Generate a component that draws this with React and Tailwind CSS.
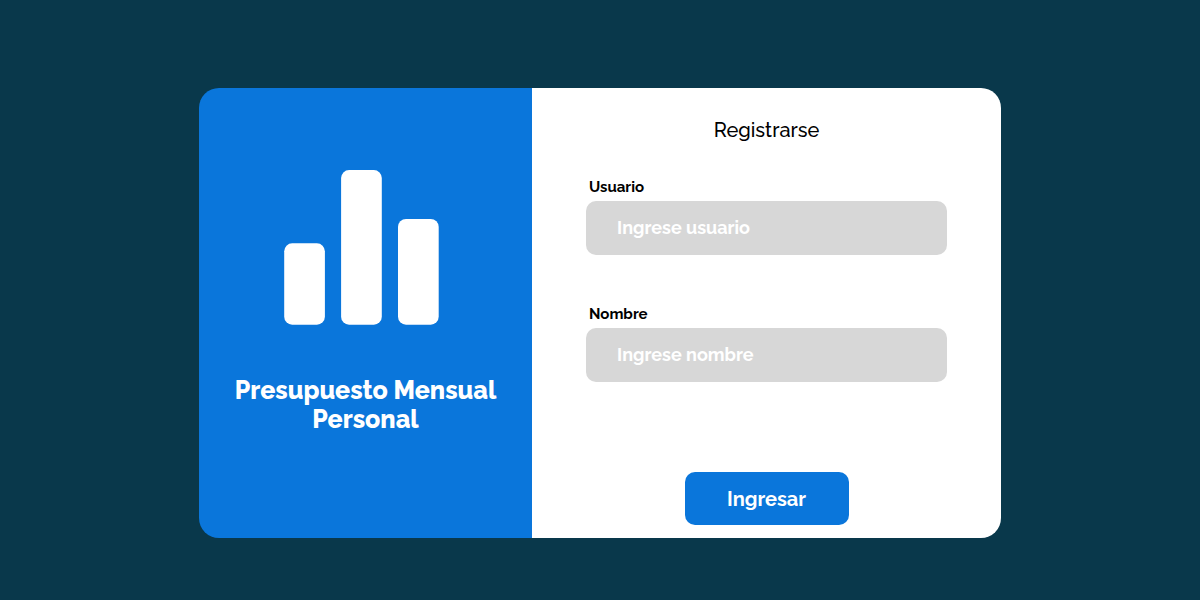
function BarsIcon() {
  return (
    <svg viewBox="0 0 155 155" className="mr-2 size-[155px]" fill="#fff" aria-hidden="true">
      <rect x="0.2" y="73.3" width="40.7" height="81.4" rx="8" />
      <rect x="57.1" y="0.1" width="40.7" height="154.6" rx="8" />
      <rect x="114" y="49" width="40.7" height="105.7" rx="8" />
    </svg>
  );
}

function Field({ id, label, placeholder }) {
  return (
    <div className="flex flex-col gap-1">
      <label htmlFor={id} className="pl-[3px] text-[15px] leading-5 font-bold text-black">
        {label}
      </label>
      <input
        id={id}
        type="text"
        placeholder={placeholder}
        className="h-[54px] w-full rounded-[10px] bg-[#d7d7d7] px-[31px] pb-px text-[18px] font-bold text-black placeholder:text-white"
      />
    </div>
  );
}

export default function App() {
  return (
    <main className="flex min-h-screen justify-center bg-[#09384b] px-4 pt-[88px] pb-[62px] font-['Raleway','Lato',sans-serif]">
      <div className="flex w-full max-w-[802px] self-start overflow-hidden rounded-[20px]">
        <section className="flex basis-[333px] flex-col items-center bg-[#0a76db] px-4 pt-[82px] pb-[104px]">
          <BarsIcon />
          <h1 className="mt-[51px] text-center text-[25px] leading-[29px] font-extrabold text-white">
            Presupuesto Mensual
            <br />
            Personal
          </h1>
        </section>
        <form className="flex flex-1 flex-col bg-white px-[54px] pt-7 pb-[13px]" onSubmit={(e) => e.preventDefault()}>
          <h2 className="text-center text-[20px] leading-7 font-medium text-black">Registrarse</h2>
          <div className="mt-[33px] flex flex-col gap-[49px]">
            <Field id="usuario" label="Usuario" placeholder="Ingrese usuario" />
            <Field id="nombre" label="Nombre" placeholder="Ingrese nombre" />
          </div>
          <button
            type="submit"
            className="mt-auto h-[53px] w-[164px] self-center rounded-[10px] bg-[#0a76db] text-[20px] font-bold text-white"
          >
            Ingresar
          </button>
        </form>
      </div>
    </main>
  );
}
